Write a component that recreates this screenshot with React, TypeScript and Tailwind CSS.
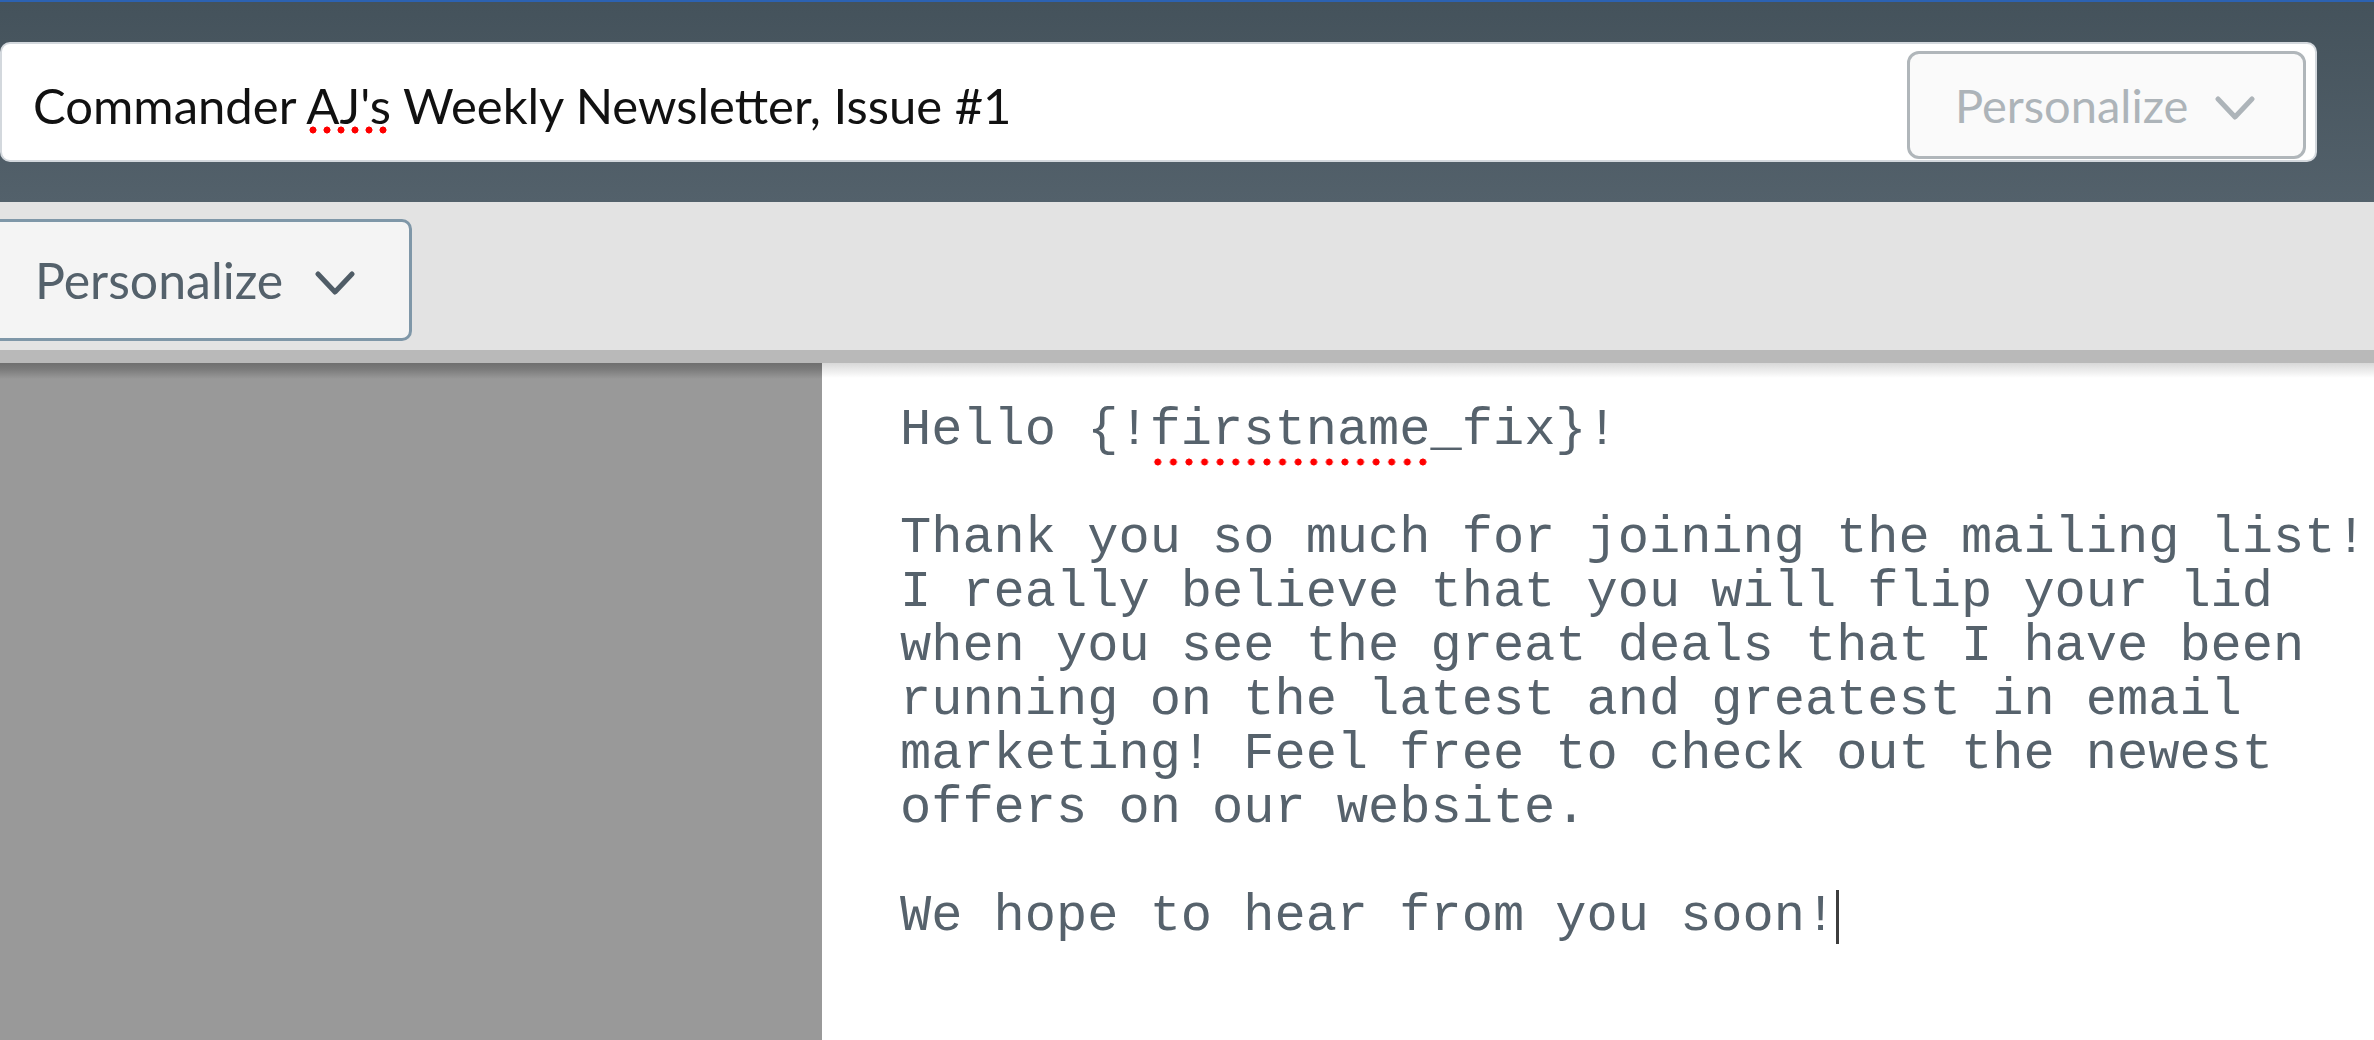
import React from "react";

function Chevron({ color, className }: { color: string; className?: string }) {
  return (
    <svg className={className} width="40" height="26" viewBox="0 0 40 26" fill="none">
      <polyline points="3,3 20,21 37,3" stroke={color} strokeWidth="5" strokeLinecap="round" strokeLinejoin="round" />
    </svg>
  );
}

function Dots({ spacing }: { spacing: "title" | "mono" }) {
  return (
    <span
      className={
        spacing === "title"
          ? "absolute left-0 right-0 h-[8px] bottom-[0px] bg-[radial-gradient(circle,#ff0000_3.2px,transparent_3.8px)] bg-[length:14px_8px] bg-repeat-x"
          : "absolute left-0 right-0 h-[8px] bottom-[-6px] bg-[radial-gradient(circle,#ff0000_3.2px,transparent_3.8px)] bg-[length:15.6px_8px] bg-repeat-x"
      }
    />
  );
}

export default function App() {
  const lines = [
    "Thank you so much for joining the mailing list!",
    "I really believe that you will flip your lid",
    "when you see the great deals that I have been",
    "running on the latest and greatest in email",
    "marketing! Feel free to check out the newest",
    "offers on our website.",
  ];
  return (
    <div className="w-[2374px] h-[1040px] overflow-hidden flex flex-col bg-white">
      <div className="h-[2px] bg-[#2c62b2] shrink-0" />
      <header className="h-[200px] shrink-0 bg-gradient-to-b from-[#44525b] to-[#53616b] pt-[40px] pr-[57px]">
        <div className="h-[120px] bg-white rounded-[10px] border-2 border-[#d3d8dd] flex items-start justify-between pl-[31px] pr-[9px] pt-[7px]">
          <div className="h-[104px] flex items-center pt-[6px] font-['Lato',sans-serif] text-[49px] text-[#111]">
            <span className="whitespace-pre">
              Commander{" "}
              <span className="relative">
                AJ's
                <Dots spacing="title" />
              </span>{" "}
              Weekly Newsletter, Issue #1
            </span>
          </div>
          <div className="h-[108px] w-[399px] bg-[#fafafa] border-[3px] border-[#b0b6ba] rounded-[12px] flex items-center pl-[45px] font-['Lato',sans-serif] text-[47px] text-[#adb4b9]">
            <span>Personalize</span>
            <Chevron color="#adb4b9" className="ml-[27px] mt-[8px]" />
          </div>
        </div>
      </header>
      <div className="h-[161px] shrink-0 bg-[#e3e3e3] border-b-[13px] border-[#b9b9b9] pt-[17px]">
        <div className="-ml-[10px] h-[122px] w-[422px] bg-[#f4f4f4] border-[3px] border-[#7f97a8] rounded-[10px] flex items-center pl-[42px] font-['Lato',sans-serif] text-[50px] text-[#54616b]">
          <span>Personalize</span>
          <Chevron color="#4f5c66" className="ml-[32px] mt-[8px]" />
        </div>
      </div>
      <div className="flex-1 flex">
        <div className="w-[822px] shrink-0 bg-[linear-gradient(to_bottom,#6f6f6f,#7a7a7a_6px,#999999_16px)]" />
        <div className="flex-1 bg-[linear-gradient(to_bottom,#d8d8d8,#ffffff_15px)] pl-[78px] pt-[41px] font-['Courier_New','Courier','Nimbus_Mono_PS','Nimbus_Mono_L','FreeMono','Liberation_Mono',monospace] text-[52px] leading-[54px] text-[#56626c]">
          <div className="whitespace-pre">
            Hello {"{!"}
            <span className="relative">
              firstname
              <Dots spacing="mono" />
            </span>
            {"_fix}!"}
          </div>
          <div className="h-[54px]" />
          {lines.map((l) => (
            <div key={l} className="whitespace-pre">
              {l}
            </div>
          ))}
          <div className="h-[54px]" />
          <div className="whitespace-pre">
            We hope to hear from you soon!
            <span className="inline-block w-[3px] h-[54px] bg-[#3d3d3d] align-[-14px]" />
          </div>
        </div>
      </div>
    </div>
  );
}
